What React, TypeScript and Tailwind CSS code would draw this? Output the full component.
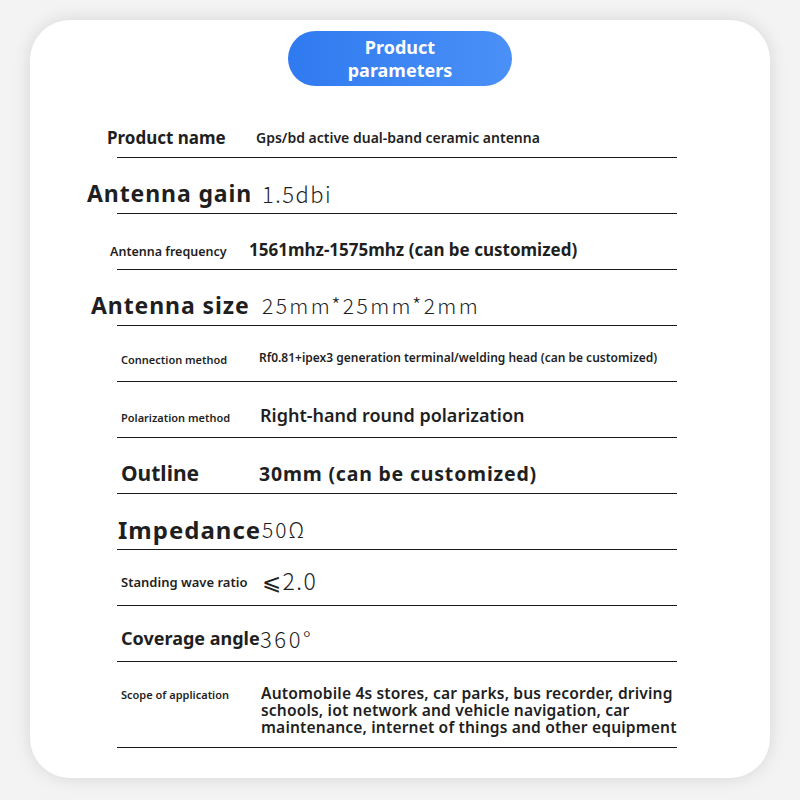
const SANS = '"Noto Sans", "Open Sans", sans-serif';
const LIGHT = '"Noto Sans CJK SC", "Noto Sans", sans-serif';

type Row = {
  label: string;
  value: string;
  rowClass: string;
  labelClass: string;
  valueClass: string;
  thin?: boolean;
};

const rows: Row[] = [
  {
    label: 'Product name',
    value: 'Gps/bd active dual-band ceramic antenna',
    rowClass: 'pt-4',
    labelClass: 'ml-[-10px] text-[17px] font-bold',
    valueClass: 'ml-[-1px] text-[14px] font-semibold',
  },
  {
    label: 'Antenna gain',
    value: '1.5dbi',
    rowClass: 'pt-4',
    labelClass: 'ml-[-30px] text-[23px] font-bold tracking-[0.9px]',
    valueClass: 'ml-[5px] text-[22px] font-light tracking-[1.5px]',
    thin: true,
  },
  {
    label: 'Antenna frequency',
    value: '1561mhz-1575mhz (can be customized)',
    rowClass: 'pt-4',
    labelClass: 'ml-[-7px] text-[12.5px] font-semibold',
    valueClass: 'ml-[-8px] text-[17px] font-bold',
  },
  {
    label: 'Antenna size',
    value: '25mm*25mm*2mm',
    rowClass: 'pt-4',
    labelClass: 'ml-[-26px] text-[23px] font-bold tracking-[0.9px]',
    valueClass: 'ml-[5px] text-[21px] font-light tracking-[2.4px]',
    thin: true,
  },
  {
    label: 'Connection method',
    value: 'Rf0.81+ipex3 generation terminal/welding head (can be customized)',
    rowClass: 'pt-[8px]',
    labelClass: 'ml-[4px] text-[11px] font-semibold',
    valueClass: 'ml-[2px] text-[12px] font-semibold',
  },
  {
    label: 'Polarization method',
    value: 'Right-hand round polarization',
    rowClass: 'pt-[12px]',
    labelClass: 'ml-[4px] text-[11px] font-semibold',
    valueClass: 'ml-[3px] text-[18px] font-semibold',
  },
  {
    label: 'Outline',
    value: '30mm (can be customized)',
    rowClass: 'pt-4',
    labelClass: 'ml-[4px] text-[21px] font-bold',
    valueClass: 'ml-[2px] text-[19.5px] font-bold tracking-[0.8px]',
  },
  {
    label: 'Impedance',
    value: '50Ω',
    rowClass: 'pt-4',
    labelClass: 'ml-[1px] text-[24px] font-bold tracking-[1px]',
    valueClass: 'ml-[5px] text-[21px] font-light tracking-[2px]',
    thin: true,
  },
  {
    label: 'Standing wave ratio',
    value: '⩽2.0',
    rowClass: 'pt-[6px]',
    labelClass: 'ml-[4px] text-[13px] font-semibold',
    valueClass: 'ml-[5px] text-[23px] font-light tracking-[1.5px]',
    thin: true,
  },
  {
    label: 'Coverage angle',
    value: '360°',
    rowClass: 'pt-[10px]',
    labelClass: 'ml-[4px] text-[18px] font-bold',
    valueClass: 'ml-[3px] text-[22px] font-light tracking-[2.6px]',
    thin: true,
  },
];

export default function App() {
  return (
    <div className="min-h-[800px] w-[800px] bg-[#f3f3f3] pt-[20px]" style={{ fontFamily: SANS }}>
      <div className="mx-auto flex h-[758px] w-[740px] flex-col items-center rounded-[40px] bg-white shadow-[0_0_18px_rgba(0,0,0,0.12)]">
        <div className="mt-[11px] flex h-[55px] w-[224px] flex-col items-center justify-center rounded-full bg-gradient-to-r from-[#2f7af0] to-[#4a90f7] text-[18px] font-bold leading-[23px] text-white">
          <span>Product</span>
          <span>parameters</span>
        </div>

        <div className="ml-[-6px] mt-[16px] w-[560px] text-[#1f1f1f]">
          {rows.map((r) => (
            <div key={r.label} className={`flex h-[56px] items-center border-b border-[#1a1a1a] ${r.rowClass}`}>
              <div className="w-[140px] shrink-0 whitespace-nowrap">
                <span className={`inline-block ${r.labelClass}`}>{r.label}</span>
              </div>
              <span
                className={`whitespace-nowrap ${r.valueClass}`}
                style={r.thin ? { fontFamily: LIGHT } : undefined}
              >
                {r.value}
              </span>
            </div>
          ))}
          <div className="flex h-[86px] items-start border-b border-[#1a1a1a] pt-[23px]">
            <div className="w-[140px] shrink-0 whitespace-nowrap leading-[17px]">
              <span className="ml-[4px] inline-block text-[11px] font-semibold">Scope of application</span>
            </div>
            <p className="ml-[4px] whitespace-nowrap text-[15.6px] font-semibold leading-[17px] tracking-[0.15px]">
              Automobile 4s stores, car parks, bus recorder, driving
              <br />
              schools, iot network and vehicle navigation, car
              <br />
              maintenance, internet of things and other equipment
            </p>
          </div>
        </div>
      </div>
    </div>
  );
}
